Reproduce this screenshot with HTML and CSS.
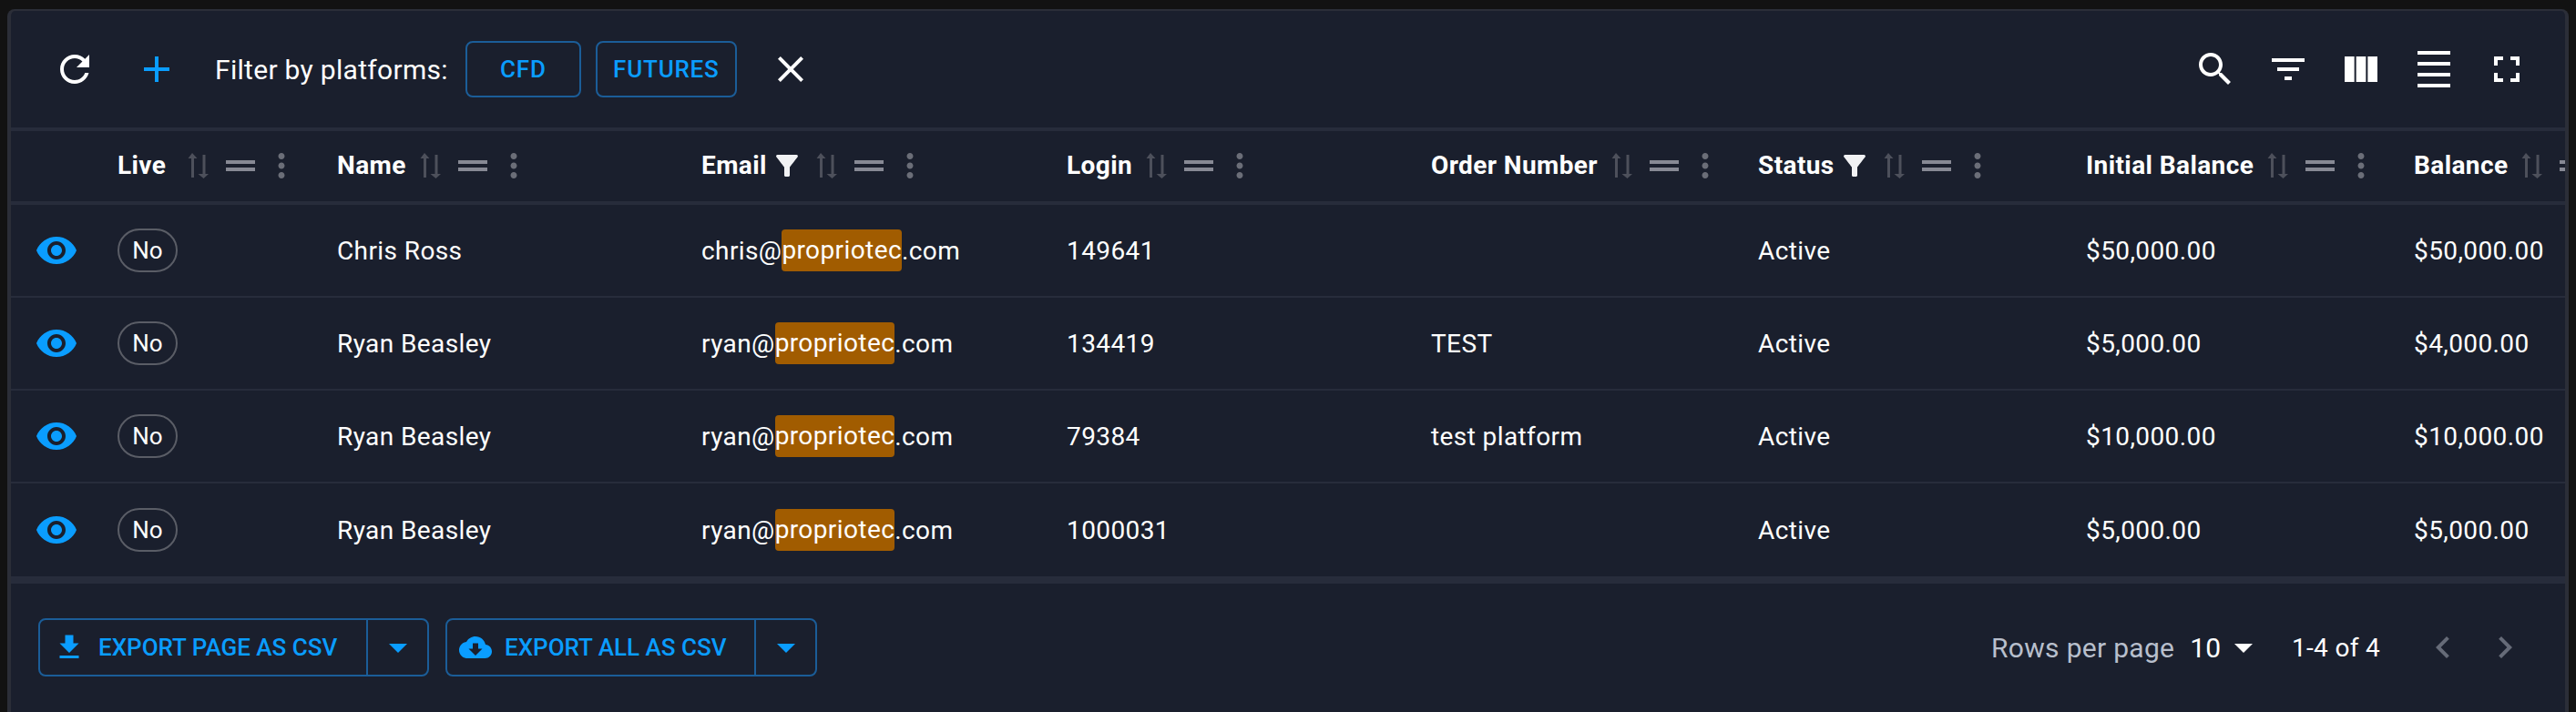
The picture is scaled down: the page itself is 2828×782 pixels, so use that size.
FILE: index.html
```html
<!DOCTYPE html>
<html lang="en">
<head>
<meta charset="utf-8">
<title>Accounts</title>
<link rel="stylesheet" href="styles.css">
</head>
<body>
<svg class="defs" aria-hidden="true">
  <symbol id="i-sort" viewBox="0 0 24 28"><path d="M5 0l5.5 6H7v21H4V6H.5zM16.500 2h3v21H23l-5.500 5-6-5h5z"/></symbol>
  <symbol id="i-grip" viewBox="0 0 24 24"><path d="M20 9H4v2h16V9zM4 15h16v-2H4v2z"/></symbol>
  <symbol id="i-more" viewBox="0 0 24 24"><path d="M12 8c1.100 0 2-.9 2-2s-.9-2-2-2-2 .9-2 2 .9 2 2 2zm0 2c-1.100 0-2 .9-2 2s.9 2 2 2 2-.9 2-2-.9-2-2-2zm0 6c-1.100 0-2 .9-2 2s.9 2 2 2 2-.9 2-2-.9-2-2-2z"/></symbol>
  <symbol id="i-funnel" viewBox="0 0 24 24"><path d="M4.250 5.610C6.270 8.200 10 13 10 13v6c0 .55.45 1 1 1h2c.55 0 1-.45 1-1v-6s3.720-4.800 5.740-7.390c.51-.66.04-1.610-.79-1.610H5.040c-.83 0-1.300.95-.79 1.610z"/></symbol>
  <symbol id="i-eye" viewBox="0 0 24 24"><path d="M12 4.500C7 4.500 2.730 7.610 1 12c1.730 4.390 6 7.500 11 7.500s9.270-3.110 11-7.500c-1.730-4.390-6-7.500-11-7.500zM12 17c-2.760 0-5-2.240-5-5s2.240-5 5-5 5 2.240 5 5-2.240 5-5 5zm0-8c-1.660 0-3 1.340-3 3s1.340 3 3 3 3-1.340 3-3-1.340-3-3-3z"/></symbol>
  <symbol id="i-drop" viewBox="0 0 24 24"><path d="M7 10l5 5 5-5z"/></symbol>
</svg>
<main class="card">
  <div class="toolbar">
    <div class="tools-left">
      <button class="icon-btn"><svg class="icon48" viewBox="0 0 24 24"><path d="M17.650 6.350C16.200 4.900 14.210 4 12 4c-4.420 0-7.990 3.580-7.990 8s3.570 8 7.990 8c3.730 0 6.840-2.550 7.730-6h-2.080c-.82 2.330-3.040 4-5.650 4-3.310 0-6-2.690-6-6s2.690-6 6-6c1.660 0 3.140.69 4.220 1.780L13 11h7V4l-2.350 2.350z"/></svg></button>
      <button class="icon-btn add"><svg class="icon48" viewBox="0 0 24 24"><path d="M19 13h-6v6h-2v-6H5v-2h6V5h2v6h6v2z"/></svg></button>
      <span class="filter-label">Filter by platforms:</span>
      <button class="outline cfd">CFD</button>
      <button class="outline futures">FUTURES</button>
      <button class="icon-btn close"><svg class="icon48" viewBox="0 0 24 24"><path d="M19 6.410L17.590 5 12 10.590 6.410 5 5 6.410 10.590 12 5 17.590 6.410 19 12 13.410 17.590 19 19 17.590 13.410 12z"/></svg></button>
    </div>
    <div class="tools-right">
      <button class="icon-btn"><svg class="icon48" viewBox="0 0 24 24"><path d="M15.500 14h-.79l-.28-.27C15.410 12.590 16 11.110 16 9.500 16 5.910 13.090 3 9.500 3S3 5.910 3 9.500 5.910 16 9.500 16c1.610 0 3.090-.59 4.230-1.570l.27.28v.79l5 4.990L20.490 19l-4.990-5zm-6 0C7.010 14 5 11.990 5 9.500S7.010 5 9.500 5 14 7.010 14 9.500 11.990 14 9.500 14z"/></svg></button>
      <button class="icon-btn"><svg class="icon48" viewBox="0 0 24 24"><path d="M10 18h4v-2h-4v2zM3 6v2h18V6H3zm3 7h12v-2H6v2z"/></svg></button>
      <button class="icon-btn"><svg class="icon48" viewBox="0 0 24 24"><path d="M14.670 5v14H9.330V5h5.340zm1 14H21V5h-5.330v14zm-7.340 0V5H3v14h5.330z"/></svg></button>
      <button class="icon-btn"><svg class="icon48" viewBox="0 0 24 24"><path d="M3 2h18v2H3zm0 6h18v2H3zm0 6h18v2H3zm0 6h18v2H3z"/></svg></button>
      <button class="icon-btn"><svg class="icon48" viewBox="0 0 24 24"><path d="M7 14H5v5h5v-2H7v-3zm-2-4h2V7h3V5H5v5zm12 7h-3v2h5v-5h-2v3zM14 5v2h3v3h2V5h-5z"/></svg></button>
    </div>
  </div>

  <div class="table">
    <div class="row head">
      <div class="cell"></div>
      <div class="cell"><span class="title title-live">Live</span><svg class="sort"><use href="#i-sort"/></svg><svg class="grip"><use href="#i-grip"/></svg><svg class="more"><use href="#i-more"/></svg></div>
      <div class="cell"><span class="title">Name</span><svg class="sort"><use href="#i-sort"/></svg><svg class="grip"><use href="#i-grip"/></svg><svg class="more"><use href="#i-more"/></svg></div>
      <div class="cell"><span class="title">Email</span><svg class="funnel"><use href="#i-funnel"/></svg><svg class="sort sort-f"><use href="#i-sort"/></svg><svg class="grip"><use href="#i-grip"/></svg><svg class="more"><use href="#i-more"/></svg></div>
      <div class="cell"><span class="title">Login</span><svg class="sort"><use href="#i-sort"/></svg><svg class="grip"><use href="#i-grip"/></svg><svg class="more"><use href="#i-more"/></svg></div>
      <div class="cell"><span class="title">Order Number</span><svg class="sort"><use href="#i-sort"/></svg><svg class="grip"><use href="#i-grip"/></svg><svg class="more"><use href="#i-more"/></svg></div>
      <div class="cell"><span class="title">Status</span><svg class="funnel"><use href="#i-funnel"/></svg><svg class="sort sort-f"><use href="#i-sort"/></svg><svg class="grip"><use href="#i-grip"/></svg><svg class="more"><use href="#i-more"/></svg></div>
      <div class="cell"><span class="title">Initial Balance</span><svg class="sort"><use href="#i-sort"/></svg><svg class="grip"><use href="#i-grip"/></svg><svg class="more"><use href="#i-more"/></svg></div>
      <div class="cell"><span class="title">Balance</span><svg class="sort"><use href="#i-sort"/></svg><svg class="grip"><use href="#i-grip"/></svg><svg class="more"><use href="#i-more"/></svg></div>
    </div>

    <div class="row">
      <div class="cell eye-cell"><svg class="eye"><use href="#i-eye"/></svg></div>
      <div class="cell"><span class="chip">No</span></div>
      <div class="cell">Chris Ross</div>
      <div class="cell">chris@<mark>propriotec</mark>.com</div>
      <div class="cell">149641</div>
      <div class="cell"></div>
      <div class="cell">Active</div>
      <div class="cell">$50,000.00</div>
      <div class="cell">$50,000.00</div>
    </div>
    <div class="row">
      <div class="cell eye-cell"><svg class="eye"><use href="#i-eye"/></svg></div>
      <div class="cell"><span class="chip">No</span></div>
      <div class="cell">Ryan Beasley</div>
      <div class="cell">ryan@<mark>propriotec</mark>.com</div>
      <div class="cell">134419</div>
      <div class="cell">TEST</div>
      <div class="cell">Active</div>
      <div class="cell">$5,000.00</div>
      <div class="cell">$4,000.00</div>
    </div>
    <div class="row">
      <div class="cell eye-cell"><svg class="eye"><use href="#i-eye"/></svg></div>
      <div class="cell"><span class="chip">No</span></div>
      <div class="cell">Ryan Beasley</div>
      <div class="cell">ryan@<mark>propriotec</mark>.com</div>
      <div class="cell">79384</div>
      <div class="cell">test platform</div>
      <div class="cell">Active</div>
      <div class="cell">$10,000.00</div>
      <div class="cell">$10,000.00</div>
    </div>
    <div class="row last">
      <div class="cell eye-cell"><svg class="eye"><use href="#i-eye"/></svg></div>
      <div class="cell"><span class="chip">No</span></div>
      <div class="cell">Ryan Beasley</div>
      <div class="cell">ryan@<mark>propriotec</mark>.com</div>
      <div class="cell">1000031</div>
      <div class="cell"></div>
      <div class="cell">Active</div>
      <div class="cell">$5,000.00</div>
      <div class="cell">$5,000.00</div>
    </div>
  </div>

  <div class="footer">
    <div class="exports">
      <div class="split split-page">
        <button class="split-main"><svg class="icon36" viewBox="0 0 24 24"><path d="M5 20h14v-2H5v2zM19 9h-4V3H9v6H5l7 7 7-7z"/></svg><span>EXPORT PAGE AS CSV</span></button>
        <button class="split-drop"><svg class="icon48"><use href="#i-drop"/></svg></button>
      </div>
      <div class="split split-all">
        <button class="split-main"><svg class="icon36" viewBox="0 0 24 24"><path d="M19.350 10.040C18.670 6.590 15.640 4 12 4 9.110 4 6.600 5.640 5.350 8.040 2.340 8.360 0 10.910 0 14c0 3.310 2.690 6 6 6h13c2.760 0 5-2.240 5-5 0-2.640-2.050-4.780-4.650-4.960zM17 13l-5 5-5-5h3V9h4v4h3z"/></svg><span>EXPORT ALL AS CSV</span></button>
        <button class="split-drop"><svg class="icon48"><use href="#i-drop"/></svg></button>
      </div>
    </div>
    <div class="pager">
      <span class="rows-label">Rows per page</span>
      <span class="rows-value">10</span>
      <svg class="icon48 rows-drop"><use href="#i-drop"/></svg>
      <span class="range">1-4 of 4</span>
      <svg class="icon48 chev" viewBox="0 0 24 24"><path d="M15.410 7.410L14 6l-6 6 6 6 1.410-1.410L10.830 12z"/></svg>
      <svg class="icon48 chev" viewBox="0 0 24 24"><path d="M10 6L8.590 7.410 13.170 12l-4.580 4.590L10 18l6-6z"/></svg>
    </div>
  </div>
</main>
</body>
</html>
```

FILE: styles.css
```css
* { box-sizing: border-box; }
html, body { height: 100%; }
body {
  margin: 0;
  padding: 10px 8px 0;
  background: #121212;
  font-family: Roboto, "Liberation Sans", sans-serif;
  color: #fff;
  overflow: hidden;
}
.defs { display: none; }
button { font: inherit; background: none; border: 0; color: inherit; padding: 0; }
.card {
  height: 772px;
  background: #1a1f2d;
  border: solid #2b2e38;
  border-width: 2px 4px 0;
  border-radius: 8px 8px 0 0;
  overflow: hidden;
}
.toolbar {
  height: 128px;
  display: flex;
  justify-content: space-between;
  align-items: center;
  padding: 16px 40px 16px 46px;
}
.tools-left, .tools-right { display: flex; align-items: center; }
.icon-btn { width: 48px; height: 48px; display: flex; }
.tools-right { gap: 32px; }
.icon48 { width: 48px; height: 48px; fill: currentColor; display: block; flex: none; }
.icon36 { width: 36px; height: 36px; fill: currentColor; display: block; flex: none; }
.add { color: #0a9dff; margin-left: 42px; }
.filter-label { font-size: 30px; margin-left: 40px; letter-spacing: .3px; }
.outline {
  height: 62px;
  border: 2px solid #1b5d98;
  border-radius: 8px;
  color: #0a9dff;
  font-size: 26px;
  font-weight: 500;
  letter-spacing: .8px;
}
.cfd { width: 127px; margin-left: 19px; }
.futures { width: 155px; margin-left: 16px; }
.close { margin-left: 35px; }

.table { border-top: 4px solid #272c3b; }
.row {
  display: grid;
  grid-template-columns: 101px 241px 400px 401px 400px 359px 360px 360px 360px;
  height: 102px;
  border-bottom: 2px solid #272c3b;
  font-size: 28px;
  letter-spacing: .4px;
}
.row.head { height: 81px; border-bottom-width: 4px; }
.row.last { height: 102px; border-bottom: 0; }
.cell { display: flex; align-items: center; padding-left: 16px; white-space: nowrap; min-width: 0; }
.eye-cell { padding-left: 26px; }
.head .cell { padding-bottom: 2px; }
.title { font-weight: 700; font-size: 28px; }
.title-live { min-width: 60px; margin-right: 17px; }
svg.sort { width: 24px; height: 28px; fill: #4d505b; margin-left: 15px; flex: none; }
.title-live + svg.sort { margin-left: 0; }
svg.sort-f { margin-left: 14px; }
svg.grip { width: 48px; height: 48px; fill: #878994; margin-left: 10px; flex: none; }
svg.more { width: 42px; height: 42px; fill: #6b6e78; margin-left: 0; flex: none; }
svg.funnel { width: 36px; height: 36px; fill: #f1f2f4; margin-left: 4px; flex: none; }
svg.eye { width: 48px; height: 48px; fill: #0a9dff; }
.chip {
  display: inline-flex;
  align-items: center;
  justify-content: center;
  width: 66px;
  height: 48px;
  border: 2px solid #5a5d66;
  border-radius: 24px;
  font-size: 26px;
  letter-spacing: 0;
}
mark {
  background: #a15c00;
  color: #fff;
  border-radius: 4px;
  padding: 6px 0 7px;
}

.footer {
  height: 145px;
  border-top: 8px solid #272c3b;
  display: flex;
  justify-content: space-between;
  align-items: flex-start;
  padding: 38px 0 0 30px;
}
.exports { display: flex; gap: 18px; }
.split {
  height: 64px;
  display: flex;
  border: 2px solid #1b5d98;
  border-radius: 8px;
  color: #0a9dff;
  font-size: 26px;
  font-weight: 500;
  letter-spacing: .9px;
}
.split-page { width: 429px; }
.split-all { width: 408px; }
.split-main {
  display: flex;
  align-items: center;
  gap: 14px;
  padding-left: 14px;
  flex: 1;
  border-right: 2px solid #1b5d98;
  white-space: nowrap;
}
.split-all .split-main { gap: 14px; padding-left: 13px; }
.split-drop { width: 65px; display: flex; align-items: center; justify-content: center; }
.pager { display: flex; align-items: center; height: 64px; padding-right: 42px; }
.rows-label { font-size: 30px; color: #b8bfcc; letter-spacing: .3px; }
.rows-value { font-size: 30px; margin-left: 17px; }
.rows-drop { margin-left: 1px; }
.range { font-size: 28px; margin-left: 29px; letter-spacing: .3px; }
.chev { fill: #666b78; }
.chev:first-of-type { }
.range + .chev { margin-left: 45px; }
.chev + .chev { margin-left: 20px; }
```
